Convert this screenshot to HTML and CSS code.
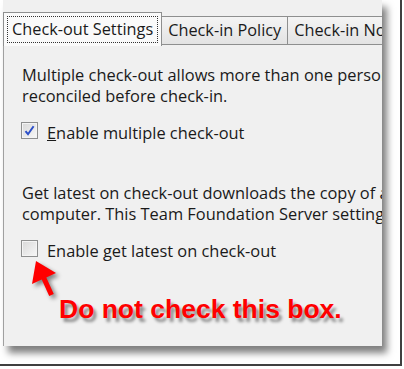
FILE: index.html
```html
<!DOCTYPE html>
<html>
<head>
	<title>Check-out Settings</title>
	<link rel="stylesheet" href="styles.css">
</head>
<body>
	<div class="frame">
		<div class="shot">
			<div class="tabstrip">
				<div class="tab active"><span class="focus">Check-out Settings</span></div>
				<div class="tab">Check-in Policy</div>
				<div class="tab">Check-in Notes</div>
			</div>
			<div class="pane">
				<p class="desc">Multiple check-out allows more than one person to edit the same file at once.<br>reconciled before check-in.</p>
				<div class="option">
					<span class="box checked">
						<svg width="11" height="11" viewBox="0 0 11 11"><path d="M1.5 6.2 L4 9.2 L9.6 1.2" fill="none" stroke="#2c4fc8" stroke-width="2"/></svg>
					</span>
					<span><u>E</u>nable multiple check-out</span>
				</div>
				<p class="desc gap">Get latest on check-out downloads the copy of a file from the server to your<br>computer. This Team Foundation Server setting applies to all users.</p>
				<div class="option">
					<span class="box"></span>
					<span>Enable <u>g</u>et latest on check-out</span>
				</div>
				<div class="callout">Do not check this box.</div>
			</div>
			<!-- annotation arrow drawn over the dialog -->
			<svg class="arrow" width="379" height="346" viewBox="0 0 379 346">
				<polygon points="33,261 53,273 43.3,277.5 50.8,294 46.2,296 38.7,279.5 29,284" fill="#ff0000"/>
			</svg>
		</div>
	</div>
</body>
</html>
```

FILE: styles.css
```css
body {
	margin: 0;
	background-color: #fff;
	font-family: "Open Sans", sans-serif;
}
.frame {
	width: 400px;
	height: 364px;
	border-right: 2px solid #404040;
	border-bottom: 2px solid #404040;
}
.shot {
	position: relative;
	margin-left: 3px;
	width: 379px;
	height: 346px;
	background-color: #f0f0f0;
	box-shadow: 5px 7px 7px rgba(0, 0, 0, 0.5);
	overflow: hidden;
}
.tabstrip {
	display: flex;
	align-items: flex-end;
	height: 45px;
	padding-top: 11px;
	box-sizing: border-box;
	font-size: 16.3px;
	color: #1a1a1a;
	white-space: nowrap;
}
.tab {
	height: 29px;
	line-height: 27px;
	padding: 0 6px 0 6px;
	border: 1px solid #8e8f8f;
	border-left: none;
	box-sizing: border-box;
	background: linear-gradient(#f4f4f4, #e3e3e3);
}
.tab.active {
	height: 34px;
	padding: 3px 3px 0 3px;
	margin-bottom: -1px;
	border-left: 1px solid #8e8f8f;
	border-bottom: none;
	background: #fafafa;
}
.focus {
	display: block;
	line-height: 25px;
	padding: 0 4px;
	border: 1px dotted #333;
}
.pane {
	height: 301px;
	border-left: 1px solid #a0a0a0;
	padding: 19px 0 0 18px;
	box-sizing: border-box;
	font-size: 16.4px;
	line-height: 21px;
	color: #1a1a1a;
	white-space: nowrap;
}
.desc {
	margin: 0;
}
.desc.gap {
	margin-top: 39px;
}
.option {
	display: flex;
	align-items: flex-start;
	gap: 9px;
	margin-top: 16px;
	margin-left: -1px;
}
.box {
	display: flex;
	align-items: center;
	justify-content: center;
	width: 17px;
	height: 17px;
	border: 1px solid #8e8f8f;
	box-sizing: border-box;
	background: linear-gradient(135deg, #d8d8d8, #f8f8f8);
	box-shadow: inset 0 0 0 1px #f4f4f4;
}
.callout {
	margin: 33px 0 0 37px;
	font-family: "Liberation Sans", Arial, sans-serif;
	font-weight: bold;
	font-size: 26.5px;
	line-height: 30px;
	color: #ff0000;
	text-shadow: 3px 4px 3px rgba(0, 0, 0, 0.4);
}
.arrow {
	position: absolute;
	left: 0;
	top: 0;
	filter: drop-shadow(3px 3px 2px rgba(0, 0, 0, 0.45));
}
```
